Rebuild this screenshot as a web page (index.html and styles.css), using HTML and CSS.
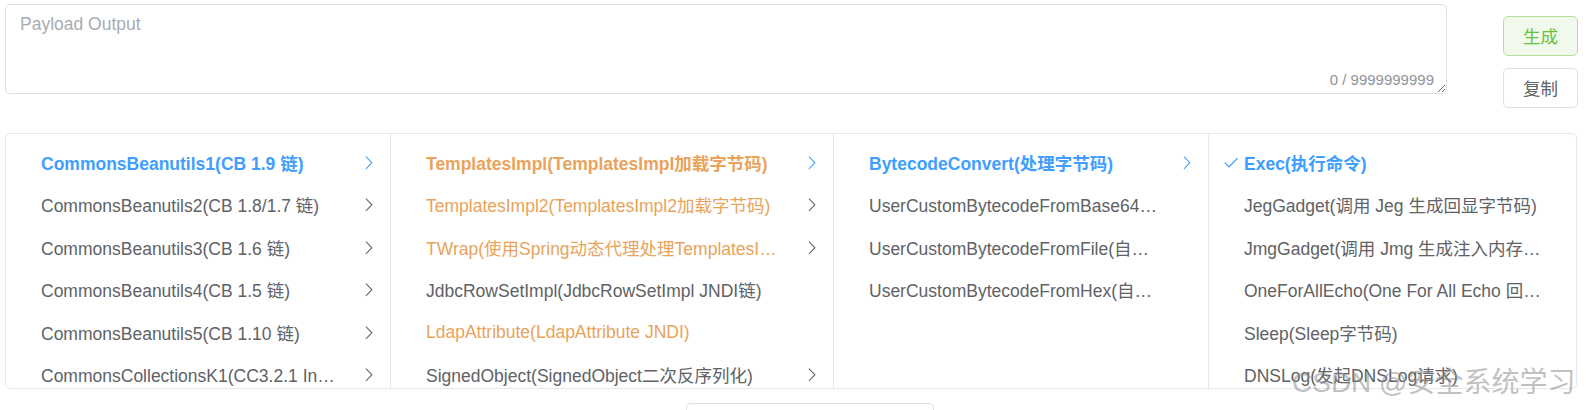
FILE: index.html
```html
<!DOCTYPE html>
<html lang="zh-CN">
<head>
<meta charset="utf-8">
<title>Payload</title>
<link rel="stylesheet" href="styles.css">
</head>
<body>
<div class="top">
  <div class="ta-wrap">
    <textarea class="ta" placeholder="Payload Output"></textarea>
    <span class="count">0 / 9999999999</span>
  </div>
  <div class="btns">
    <button class="btn btn-success">生成</button>
    <button class="btn">复制</button>
  </div>
</div>

<div class="panel">
  <ul class="menu menu-1">
    <li class="node active"><span class="label">CommonsBeanutils1(CB 1.9 链)</span><svg class="arrow" viewBox="0 0 1024 1024"><path d="M340.864 149.312a30.592 30.592 0 0 0 0 42.752L652.736 512 340.864 831.872a30.592 30.592 0 0 0 0 42.752 29.12 29.12 0 0 0 41.728 0L714.24 534.336a32 32 0 0 0 0-44.672L382.592 149.376a29.12 29.12 0 0 0-41.728 0z"/></svg></li>
    <li class="node"><span class="label">CommonsBeanutils2(CB 1.8/1.7 链)</span><svg class="arrow" viewBox="0 0 1024 1024"><path d="M340.864 149.312a30.592 30.592 0 0 0 0 42.752L652.736 512 340.864 831.872a30.592 30.592 0 0 0 0 42.752 29.12 29.12 0 0 0 41.728 0L714.24 534.336a32 32 0 0 0 0-44.672L382.592 149.376a29.12 29.12 0 0 0-41.728 0z"/></svg></li>
    <li class="node"><span class="label">CommonsBeanutils3(CB 1.6 链)</span><svg class="arrow" viewBox="0 0 1024 1024"><path d="M340.864 149.312a30.592 30.592 0 0 0 0 42.752L652.736 512 340.864 831.872a30.592 30.592 0 0 0 0 42.752 29.12 29.12 0 0 0 41.728 0L714.24 534.336a32 32 0 0 0 0-44.672L382.592 149.376a29.12 29.12 0 0 0-41.728 0z"/></svg></li>
    <li class="node"><span class="label">CommonsBeanutils4(CB 1.5 链)</span><svg class="arrow" viewBox="0 0 1024 1024"><path d="M340.864 149.312a30.592 30.592 0 0 0 0 42.752L652.736 512 340.864 831.872a30.592 30.592 0 0 0 0 42.752 29.12 29.12 0 0 0 41.728 0L714.24 534.336a32 32 0 0 0 0-44.672L382.592 149.376a29.12 29.12 0 0 0-41.728 0z"/></svg></li>
    <li class="node"><span class="label">CommonsBeanutils5(CB 1.10 链)</span><svg class="arrow" viewBox="0 0 1024 1024"><path d="M340.864 149.312a30.592 30.592 0 0 0 0 42.752L652.736 512 340.864 831.872a30.592 30.592 0 0 0 0 42.752 29.12 29.12 0 0 0 41.728 0L714.24 534.336a32 32 0 0 0 0-44.672L382.592 149.376a29.12 29.12 0 0 0-41.728 0z"/></svg></li>
    <li class="node"><span class="label">CommonsCollectionsK1(CC3.2.1 InvokerTransformer 链)</span><svg class="arrow" viewBox="0 0 1024 1024"><path d="M340.864 149.312a30.592 30.592 0 0 0 0 42.752L652.736 512 340.864 831.872a30.592 30.592 0 0 0 0 42.752 29.12 29.12 0 0 0 41.728 0L714.24 534.336a32 32 0 0 0 0-44.672L382.592 149.376a29.12 29.12 0 0 0-41.728 0z"/></svg></li>
  </ul>
  <ul class="menu menu-2">
    <li class="node warn active-warn"><span class="label">TemplatesImpl(TemplatesImpl加载字节码)</span><svg class="arrow arrow-blue" viewBox="0 0 1024 1024"><path d="M340.864 149.312a30.592 30.592 0 0 0 0 42.752L652.736 512 340.864 831.872a30.592 30.592 0 0 0 0 42.752 29.12 29.12 0 0 0 41.728 0L714.24 534.336a32 32 0 0 0 0-44.672L382.592 149.376a29.12 29.12 0 0 0-41.728 0z"/></svg></li>
    <li class="node warn"><span class="label">TemplatesImpl2(TemplatesImpl2加载字节码)</span><svg class="arrow" viewBox="0 0 1024 1024"><path d="M340.864 149.312a30.592 30.592 0 0 0 0 42.752L652.736 512 340.864 831.872a30.592 30.592 0 0 0 0 42.752 29.12 29.12 0 0 0 41.728 0L714.24 534.336a32 32 0 0 0 0-44.672L382.592 149.376a29.12 29.12 0 0 0-41.728 0z"/></svg></li>
    <li class="node warn"><span class="label">TWrap(使用Spring动态代理处理TemplatesImpl)</span><svg class="arrow" viewBox="0 0 1024 1024"><path d="M340.864 149.312a30.592 30.592 0 0 0 0 42.752L652.736 512 340.864 831.872a30.592 30.592 0 0 0 0 42.752 29.12 29.12 0 0 0 41.728 0L714.24 534.336a32 32 0 0 0 0-44.672L382.592 149.376a29.12 29.12 0 0 0-41.728 0z"/></svg></li>
    <li class="node"><span class="label">JdbcRowSetImpl(JdbcRowSetImpl JNDI链)</span></li>
    <li class="node warn"><span class="label">LdapAttribute(LdapAttribute JNDI)</span></li>
    <li class="node"><span class="label">SignedObject(SignedObject二次反序列化)</span><svg class="arrow" viewBox="0 0 1024 1024"><path d="M340.864 149.312a30.592 30.592 0 0 0 0 42.752L652.736 512 340.864 831.872a30.592 30.592 0 0 0 0 42.752 29.12 29.12 0 0 0 41.728 0L714.24 534.336a32 32 0 0 0 0-44.672L382.592 149.376a29.12 29.12 0 0 0-41.728 0z"/></svg></li>
  </ul>
  <ul class="menu menu-3">
    <li class="node active"><span class="label">BytecodeConvert(处理字节码)</span><svg class="arrow" viewBox="0 0 1024 1024"><path d="M340.864 149.312a30.592 30.592 0 0 0 0 42.752L652.736 512 340.864 831.872a30.592 30.592 0 0 0 0 42.752 29.12 29.12 0 0 0 41.728 0L714.24 534.336a32 32 0 0 0 0-44.672L382.592 149.376a29.12 29.12 0 0 0-41.728 0z"/></svg></li>
    <li class="node"><span class="label">UserCustomBytecodeFromBase64(自定义Base64字节码)</span></li>
    <li class="node"><span class="label">UserCustomBytecodeFromFile(自定义文件字节码)</span></li>
    <li class="node"><span class="label">UserCustomBytecodeFromHex(自定义Hex字节码)</span></li>
  </ul>
  <ul class="menu menu-4">
    <li class="node active leaf"><svg class="check" viewBox="0 0 1024 1024"><path d="M406.656 706.944 195.84 496.256a32 32 0 1 0-45.248 45.248l256 256 512-512a32 32 0 0 0-45.248-45.248L406.592 706.944z"/></svg><span class="label">Exec(执行命令)</span></li>
    <li class="node leaf"><span class="label">JegGadget(调用 Jeg 生成回显字节码)</span></li>
    <li class="node leaf"><span class="label">JmgGadget(调用 Jmg 生成注入内存马字节码)</span></li>
    <li class="node leaf"><span class="label">OneForAllEcho(One For All Echo 回显)</span></li>
    <li class="node leaf"><span class="label">Sleep(Sleep字节码)</span></li>
    <li class="node leaf"><span class="label">DNSLog(发起DNSLog请求)</span></li>
  </ul>
</div>

<div class="bottom">
  <div class="input"></div>
</div>

<div class="watermark">CSDN @安全系统学习</div>
</body>
</html>
```

FILE: styles.css
```css
html, body {
  margin: 0;
  padding: 0;
  background: #ffffff;
}
html {
  overflow: hidden;
}
body {
  font-family: "Liberation Sans", Arial, "Noto Sans CJK SC", sans-serif;
  color: #606266;
  padding: 4px 13px 0 5px;
  width: 1591px;
  height: 410px;
  box-sizing: border-box;
  overflow: hidden;
  position: relative;
}

.top {
  display: flex;
  align-items: flex-start;
  gap: 56px;
}
.ta-wrap {
  position: relative;
  flex: 1;
  height: 90px;
}
.ta {
  display: block;
  width: 100%;
  height: 90px;
  box-sizing: border-box;
  border: 1px solid #dcdfe6;
  border-radius: 5px;
  padding: 6px 14px;
  font-family: "Liberation Sans", Arial, "Noto Sans CJK SC", sans-serif;
  font-size: 17.5px;
  line-height: 1.5;
  color: #606266;
  resize: vertical;
  outline: none;
  margin: 0;
}
.ta::placeholder {
  color: #a8abb2;
}
.count {
  position: absolute;
  right: 13px;
  bottom: 6px;
  font-size: 15px;
  line-height: 17.5px;
  color: #909399;
  background: #ffffff;
}

.btns {
  display: flex;
  flex-direction: column;
  gap: 12.5px;
  padding-top: 12px;
}
.btn {
  width: 75px;
  height: 39.5px;
  box-sizing: border-box;
  border: 1px solid #dcdfe6;
  border-radius: 5px;
  background: #ffffff;
  color: #606266;
  font-family: "Liberation Sans", Arial, "Noto Sans CJK SC", sans-serif;
  font-size: 17.5px;
  padding: 0;
  margin: 0;
}
.btn-success {
  background: #f0f9eb;
  border-color: #b3e19d;
  color: #67c23a;
}

.panel {
  margin-top: 25px;
  width: 1572px;
  height: 256px;
  box-sizing: border-box;
  border: 1px solid #e4e7ed;
  border-radius: 5px;
  display: flex;
  overflow: hidden;
}
.menu {
  list-style: none;
  margin: 0;
  padding: 7.5px 0;
  box-sizing: border-box;
  height: 100%;
  overflow: hidden;
  border-right: 1px solid #e4e7ed;
  flex: none;
}
.menu-1 { width: 385px; }
.menu-2 { width: 443px; }
.menu-3 { width: 375px; }
.menu-4 { flex: 1; border-right: none; }

.node {
  position: relative;
  display: flex;
  align-items: center;
  height: 42.5px;
  padding: 0 37.5px 0 25px;
  font-size: 17.5px;
  color: #606266;
}
.node .label {
  flex: 1;
  min-width: 0;
  padding: 0 10px;
  white-space: nowrap;
  overflow: hidden;
  text-overflow: ellipsis;
}
.node.leaf {
  padding-right: 20px;
}
.node.leaf .label {
  padding-right: 10px;
}
.node.active {
  color: #409eff;
  font-weight: bold;
}
.node.warn {
  color: #e9a35a;
}
.node.active-warn {
  font-weight: bold;
}
.arrow {
  position: absolute;
  right: 12.5px;
  top: 12.5px;
  width: 17.5px;
  height: 17.5px;
  fill: #606266;
}
.node.active .arrow,
.arrow-blue {
  fill: #409eff;
}
.check {
  position: absolute;
  left: 12.5px;
  top: 12.5px;
  width: 17.5px;
  height: 17.5px;
  fill: #409eff;
}

.bottom {
  margin-top: 14px;
  padding-left: 681px;
}
.input {
  width: 248px;
  height: 7px;
  box-sizing: border-box;
  border: 1px solid #dcdfe6;
  border-bottom: none;
  border-radius: 5px 5px 0 0;
}

.watermark {
  position: absolute;
  left: 1292px;
  top: 366px;
  font-size: 28px;
  line-height: 34px;
  white-space: nowrap;
  color: rgba(140, 140, 140, 0.55);
  font-family: "Liberation Sans", Arial, "Noto Sans CJK SC", sans-serif;
}
```
